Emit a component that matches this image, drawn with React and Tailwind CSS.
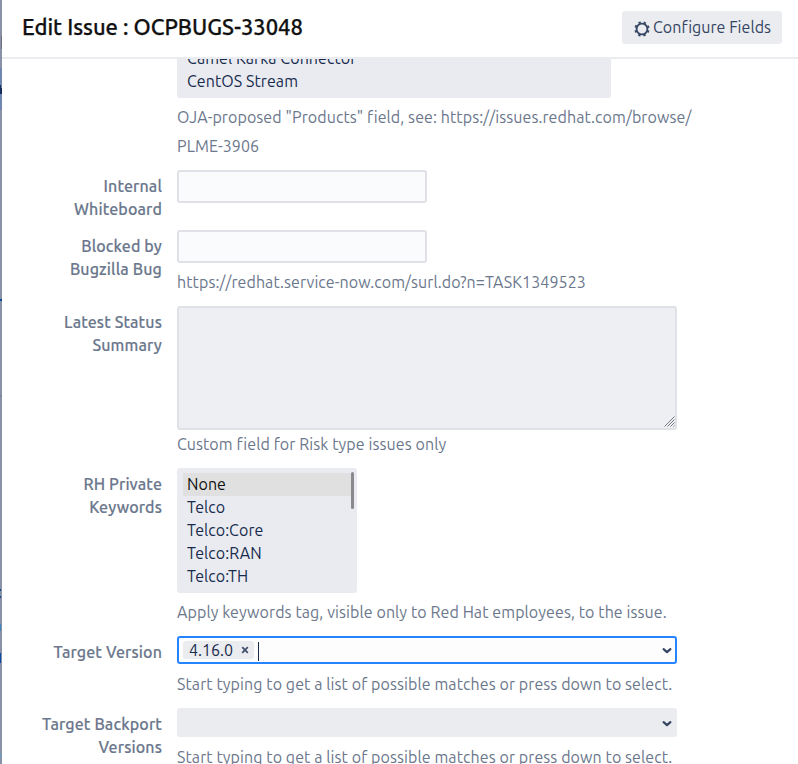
import React from "react";

function Row({ label, height, children }) {
  return (
    <div className={`flex shrink-0 ${height}`}>
      <div className="w-[160px] shrink-0 pt-[5px] text-right font-medium leading-[23px] tracking-[0.12px] text-[#6b778c] [-webkit-text-stroke:0.15px_#6b778c]">
        {label.map((line) => (
          <div key={line} className="whitespace-nowrap">{line}</div>
        ))}
      </div>
      <div className="ml-[15px] flex flex-col items-start">{children}</div>
    </div>
  );
}

function Help({ className = "", children }) {
  return <p className={`whitespace-nowrap leading-[29px] tracking-[0.09px] text-[#6b778c] ${className}`}>{children}</p>;
}

function Chevron() {
  return (
    <svg className="mr-[5px] block shrink-0" width="10" height="8" viewBox="0 0 10 8" fill="none">
      <path d="M1.6 2.2 5 5.1 8.4 2.2" stroke="#344563" strokeWidth="2.2" strokeLinecap="round" strokeLinejoin="round" />
    </svg>
  );
}

function Gear() {
  return (
    <svg width="16" height="16" viewBox="0 0 16 16" fill="none" stroke="#344563">
      <circle cx="8" cy="8" r="5.4" strokeWidth="1.8" />
      <circle cx="8" cy="8" r="6.7" strokeWidth="1.9" strokeDasharray="2.35 2.912" strokeDashoffset="-1.45" />
    </svg>
  );
}

const edgeMarks = (
  <svg className="h-[764px] w-[2px] shrink-0" width="2" height="764" viewBox="0 0 2 764" shapeRendering="crispEdges">
    <rect width="2" height="764" fill="#8991a7" />
    <rect x="1" y="36" width="1" height="13" fill="#716f7b" />
    <rect y="68" width="2" height="42" fill="#7186ae" />
    <rect y="85" width="1" height="5" fill="#172b5c" />
    <rect y="88" width="2" height="6" fill="#172b5c" />
    <rect y="299" width="2" height="2" fill="#0d4ba0" />
    <rect y="395" width="2" height="2" fill="#7d8499" />
    <rect y="589" width="1" height="2" fill="#18468c" />
    <rect y="596" width="1" height="2" fill="#18468c" />
    <rect y="624" width="1" height="7" fill="#4384bd" />
    <rect y="653" width="1" height="10" fill="#084aa5" />
    <rect y="753" width="1" height="5" fill="#6d9fc1" />
  </svg>
);

export default function App() {
  return (
    <div className="flex h-[764px] w-[798px] overflow-hidden bg-white text-[16px] [font-family:Ubuntu,'Noto_Sans',sans-serif]">
      {edgeMarks}
      <div className="flex min-w-0 flex-1 flex-col">
        <header className="flex h-[59px] shrink-0 items-start justify-between border-b-2 border-[#ebecf0] pl-[20px] pr-[16px]">
          <h1 className="mt-[12px] whitespace-nowrap text-[22px] font-medium leading-[30px] tracking-[-0.03px] text-[#111111] [-webkit-text-stroke:0.25px_#111111]">
            Edit Issue : OCPBUGS-33048
          </h1>
          <button className="mt-[11px] flex h-[33px] w-[160px] items-center rounded-[3px] bg-[#ebecf0] pl-[12px] text-[#344563]">
            <span className="mt-[3px]"><Gear /></span>
            <span className="-mt-[2px] ml-[3px] whitespace-nowrap tracking-[0.04px]">Configure Fields</span>
          </button>
        </header>

        <main className="flex min-h-0 flex-1 flex-col overflow-hidden">
          <Row height="h-[111px]" label={[]}>
            <div className="flex h-[39px] w-[434px] flex-col justify-end overflow-hidden rounded-b-[3px] bg-[#eaebf1] pb-[5px] pl-[10px] leading-[23px] tracking-[0.07px] text-[#172b4d]">
              <div className="shrink-0">Camel Karka Connector</div>
              <div className="shrink-0">CentOS Stream</div>
            </div>
            <Help className="mt-[5px]">OJA-proposed "Products" field, see: https://issues.redhat.com/browse/</Help>
            <Help>PLME-3906</Help>
          </Row>

          <Row height="h-[60px]" label={["Internal", "Whiteboard"]}>
            <div className="h-[33px] w-[250px] rounded-[3px] border-2 border-[#dfe1e6] bg-[#fafbfc]" />
          </Row>

          <Row height="h-[76px]" label={["Blocked by", "Bugzilla Bug"]}>
            <div className="h-[33px] w-[250px] rounded-[3px] border-2 border-[#dfe1e6] bg-[#fafbfc]" />
            <Help className="mt-[5px]">https://redhat.service-now.com/surl.do?n=TASK1349523</Help>
          </Row>

          <Row height="h-[162px]" label={["Latest Status", "Summary"]}>
            <div className="flex h-[124px] w-[500px] items-end justify-end rounded-[3px] border-2 border-[#dfe1e6] bg-[#eeeff3]">
              <svg className="mb-px" width="11" height="11" viewBox="0 0 11 11" stroke="#777980" strokeWidth="1">
                <path d="M.5 10.5 10.5.5M3.5 10.5l7-7M6.5 10.5l4-4M9.5 10.5l1-1" />
              </svg>
            </div>
            <Help>Custom field for Risk type issues only</Help>
          </Row>

          <Row height="h-[168px]" label={["RH Private", "Keywords"]}>
            <div className="flex h-[125px] w-[180px] rounded-[3px] bg-[#eaebf1] pl-[6px] pt-[5px] leading-[23px] tracking-[0.06px] text-[#172b4d]">
              <div className="w-[168px]">
                <div className="bg-[#e0e0e0] pl-[4px] text-[#101010]">None</div>
                <div className="pl-[4px]">Telco</div>
                <div className="pl-[4px]">Telco:Core</div>
                <div className="pl-[4px]">Telco:RAN</div>
                <div className="pl-[4px]">Telco:TH</div>
              </div>
              <div className="-mt-px h-[37px] w-[3px] rounded-full bg-[#8a8a8d]" />
            </div>
            <Help className="mt-[5px]">Apply keywords tag, visible only to Red Hat employees, to the issue.</Help>
          </Row>

          <Row height="h-[72px]" label={["Target Version"]}>
            <div className="flex h-[28px] w-[500px] items-center rounded-[3px] border-2 border-[#2684ff] bg-[#fdfdfd] pl-[4px]">
              <div className="flex h-[18px] w-[71px] items-center rounded-[3px] bg-[#ebecf0] pl-[6px] text-[#172b4d]">
                <span className="w-[44px]">4.16.0</span>
                <svg className="ml-[8px]" width="8" height="8" viewBox="0 0 8 8" stroke="#42526e" strokeWidth="1.8">
                  <path d="m1.2 1.2 5.6 5.6M6.8 1.2 1.2 6.8" />
                </svg>
              </div>
              <div className="ml-[4px] mt-[3px] h-[19px] w-px bg-[#172b4d]" />
              <div className="flex-1" />
              <span className="-mr-[2px] mt-[2px]"><Chevron /></span>
            </div>
            <Help className="mt-[6px]">Start typing to get a list of possible matches or press down to select.</Help>
          </Row>

          <Row height="h-[72px]" label={["Target Backport", "Versions"]}>
            <div className="flex h-[29px] w-[500px] items-center justify-end rounded-[3px] bg-[#ebecf0]">
              <span className="mt-[3px]"><Chevron /></span>
            </div>
            <Help className="mt-[6px]">Start typing to get a list of possible matches or press down to select.</Help>
          </Row>
        </main>
      </div>
    </div>
  );
}
